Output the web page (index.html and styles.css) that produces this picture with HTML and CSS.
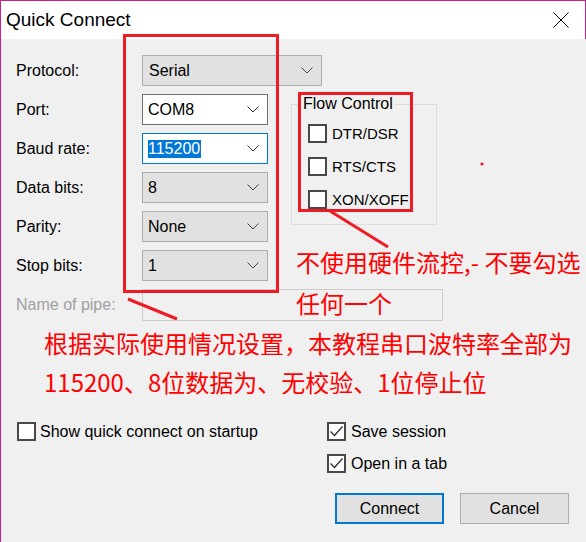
FILE: index.html
```html
<!DOCTYPE html>
<html>
<head>
<meta charset="utf-8">
<title>Quick Connect</title>
<link rel="stylesheet" href="styles.css">
</head>
<body>
<div class="screen">
  <div class="window">
    <div class="titlebar">
      <span class="title">Quick Connect</span>
      <svg class="close" viewBox="0 0 16 16"><path d="M0.5 0.5 L15.5 15.5 M15.5 0.5 L0.5 15.5" stroke="#000" stroke-width="1" fill="none"/></svg>
    </div>
    <div class="content">
      <div class="form">
        <fieldset class="flow">
          <legend>Flow Control</legend>
          <div class="check"><span class="box"></span>DTR/DSR</div>
          <div class="check"><span class="box"></span>RTS/CTS</div>
          <div class="check"><span class="box"></span>XON/XOFF</div>
        </fieldset>

        <label class="lbl">Protocol:</label>
        <div class="combo wide"><span>Serial</span><svg class="chev" viewBox="0 0 12 7"><polyline points="0.5,0.5 6,6 11.5,0.5" fill="none" stroke="#444" stroke-width="1"/></svg></div>

        <label class="lbl">Port:</label>
        <div class="combo edit"><span>COM8</span><svg class="chev" viewBox="0 0 12 7"><polyline points="0.5,0.5 6,6 11.5,0.5" fill="none" stroke="#333" stroke-width="1"/></svg></div>

        <label class="lbl">Baud rate:</label>
        <div class="combo focus"><span class="sel">115200</span><svg class="chev" viewBox="0 0 12 7"><polyline points="0.5,0.5 6,6 11.5,0.5" fill="none" stroke="#333" stroke-width="1"/></svg></div>

        <label class="lbl">Data bits:</label>
        <div class="combo"><span>8</span><svg class="chev" viewBox="0 0 12 7"><polyline points="0.5,0.5 6,6 11.5,0.5" fill="none" stroke="#444" stroke-width="1"/></svg></div>

        <label class="lbl">Parity:</label>
        <div class="combo"><span>None</span><svg class="chev" viewBox="0 0 12 7"><polyline points="0.5,0.5 6,6 11.5,0.5" fill="none" stroke="#444" stroke-width="1"/></svg></div>

        <label class="lbl">Stop bits:</label>
        <div class="combo"><span>1</span><svg class="chev" viewBox="0 0 12 7"><polyline points="0.5,0.5 6,6 11.5,0.5" fill="none" stroke="#444" stroke-width="1"/></svg></div>

        <label class="lbl disabled">Name of pipe:</label>
        <div class="textbox"></div>
      </div>

      <div class="options">
        <div class="check first"><span class="box"></span>Show quick connect on startup</div>
        <div class="opt-col">
          <div class="check"><span class="box"><svg class="tick" viewBox="0 0 15 15"><polyline points="1.5,7.5 5.5,11.5 13.5,2.5" fill="none" stroke="#333" stroke-width="1.4"/></svg></span>Save session</div>
          <div class="check"><span class="box"><svg class="tick" viewBox="0 0 15 15"><polyline points="1.5,7.5 5.5,11.5 13.5,2.5" fill="none" stroke="#333" stroke-width="1.4"/></svg></span>Open in a tab</div>
        </div>
      </div>

      <div class="buttons">
        <button class="btn default">Connect</button>
        <button class="btn">Cancel</button>
      </div>
    </div>
  </div>

  <svg class="marks" viewBox="0 0 586 542">
    <rect x="124.5" y="35.5" width="153" height="256" fill="none" stroke="#ed1c24" stroke-width="3"/>
    <rect x="299.5" y="93.5" width="112" height="117" fill="none" stroke="#ed1c24" stroke-width="3"/>
    <line x1="330" y1="211" x2="388" y2="247" stroke="#ed1c24" stroke-width="3"/>
    <line x1="128" y1="299" x2="177" y2="319" stroke="#ed1c24" stroke-width="3"/>
    <circle cx="482" cy="164" r="1.6" fill="#ed1c24"/>
  </svg>
  <div class="note note-flow">不使用硬件流控,- 不要勾选<br>任何一个</div>
  <div class="note note-serial">根据实际使用情况设置，本教程串口波特率全部为<br>115200、8位数据为、无校验、1位停止位</div>
</div>
</body>
</html>
```

FILE: styles.css
```css
html, body {
  margin: 0;
  padding: 0;
  background: #f0f0f0;
}

body {
  font-family: "Liberation Sans", Arial, sans-serif;
  font-size: 16px;
  color: #000;
}

.screen {
  position: relative;
  width: 586px;
  height: 542px;
  overflow: hidden;
}

.window {
  width: 586px;
  height: 542px;
  box-sizing: border-box;
  border-left: 1px solid #c8208c;
  background: #f0f0f0;
}

.titlebar {
  height: 39px;
  box-sizing: border-box;
  border-top: 1px solid #c8208c;
  border-right: 1px solid #c8208c;
  background: #fff;
  display: flex;
  align-items: center;
  justify-content: space-between;
  padding: 0 16px 0 5px;
}

.title {
  font-size: 19px;
}

.close {
  width: 16px;
  height: 16px;
  display: block;
}

.content {
  padding: 16px 17px 0 15px;
}

.form {
  display: grid;
  grid-template-columns: 126px 126px 23px 146px;
  grid-template-rows: repeat(6, 31px) 32px;
  row-gap: 8px;
  align-items: center;
}

.lbl {
  grid-column: 1;
}

.lbl.disabled {
  color: #a0a0a0;
}

.combo {
  grid-column: 2;
  height: 31px;
  box-sizing: border-box;
  display: flex;
  align-items: center;
  justify-content: space-between;
  padding: 0 8px 0 5px;
  border: 1px solid #adadad;
  background: #e1e1e1;
}

.combo.wide {
  grid-column: 2 / span 3;
  width: 180px;
  padding-left: 6px;
}

.combo.edit {
  background: #fff;
  border-color: #6e6e6e;
}

.combo.focus {
  background: #fff;
  border-color: #0078d7;
}

.chev {
  width: 12px;
  height: 7px;
  display: block;
}

.sel {
  background: #0078d7;
  color: #fff;
  line-height: 18px;
  padding-right: 1px;
}

.textbox {
  grid-column: 2 / span 3;
  width: 301px;
  height: 32px;
  box-sizing: border-box;
  border: 1px solid #cccccc;
  background: #f0f0f0;
}

.flow {
  grid-column: 4;
  grid-row: 2 / span 4;
  align-self: start;
  margin: 0;
  min-width: 0;
  height: 131px;
  box-sizing: border-box;
  padding: 0 0 0 9px;
  border: 1px solid #dcdcdc;
}

.flow legend {
  padding: 0 2px;
  line-height: 20px;
  font-size: 16px;
}

.flow .check {
  margin-left: 7px;
  margin-top: 14px;
  font-size: 15px;
}

.flow .check:first-of-type {
  margin-top: 10px;
}

.check {
  display: flex;
  align-items: center;
  gap: 5px;
  line-height: 19px;
  white-space: nowrap;
}

.box {
  width: 19px;
  height: 19px;
  flex: none;
  box-sizing: border-box;
  border: 2px solid #484848;
  background: #fff;
  display: flex;
  align-items: center;
  justify-content: center;
}

.tick {
  width: 15px;
  height: 15px;
  display: block;
}

.options {
  display: grid;
  grid-template-columns: 311px auto;
  align-items: start;
  margin-top: 101px;
}

.check.first {
  margin-left: 1px;
  gap: 4px;
}

.opt-col {
  display: flex;
  flex-direction: column;
  gap: 13px;
}

.buttons {
  display: flex;
  justify-content: flex-end;
  gap: 16px;
  margin-top: 20px;
}

.btn {
  width: 109px;
  height: 31px;
  box-sizing: border-box;
  border: 1px solid #adadad;
  background: #e1e1e1;
  font: inherit;
  color: #000;
  padding: 0;
}

.btn.default {
  border: 2px solid #0078d7;
}

.marks {
  position: absolute;
  left: 0;
  top: 0;
  width: 586px;
  height: 542px;
  pointer-events: none;
}

.note {
  position: absolute;
  color: #f00;
  font-family: "Noto Sans CJK SC", "Noto Sans", sans-serif;
  font-size: 24px;
  white-space: nowrap;
}

.note-flow {
  left: 296px;
  top: 241px;
  line-height: 41px;
}

.note-serial {
  left: 44px;
  top: 323px;
  line-height: 39px;
}
```
